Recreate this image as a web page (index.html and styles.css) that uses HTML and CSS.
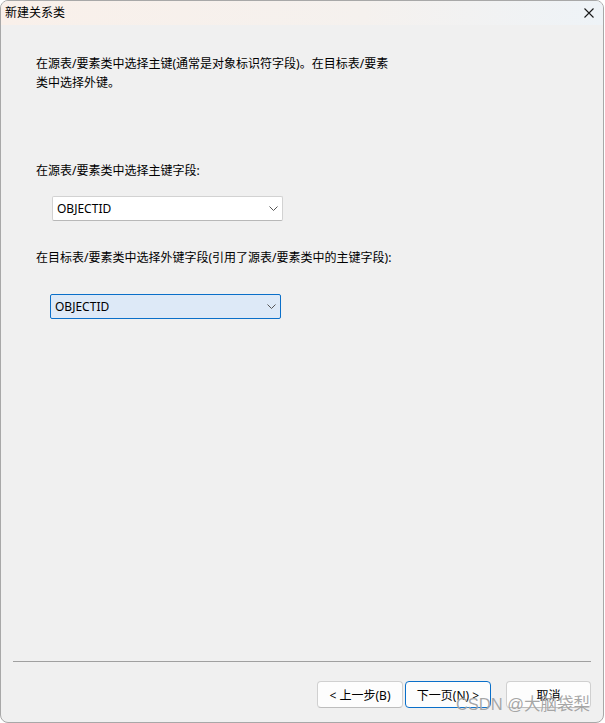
FILE: index.html
```html
<!DOCTYPE html>
<html lang="zh-CN">
    <head>
        <meta charset="UTF-8" />
        <meta name="viewport" content="width=device-width, initial-scale=1.0" />
        <title>新建关系类</title>
        <link rel="stylesheet" href="styles.css">
    </head>
    <body>
        <div class="window">
            <div class="titlebar">
                <span class="title">新建关系类</span>
                <svg class="close" width="10" height="10" viewBox="0 0 10 10">
                    <path d="M0.5 0.5 L9.5 9.5 M9.5 0.5 L0.5 9.5" stroke="#1a1a1a" stroke-width="1.1" fill="none" />
                </svg>
            </div>

            <main class="content">
                <p class="intro">在源表/要素类中选择主键(通常是对象标识符字段)。在目标表/要素<br>类中选择外键。</p>

                <label class="field-label">在源表/要素类中选择主键字段:</label>
                <div class="combo combo-source">
                    <span>OBJECTID</span>
                    <svg class="chevron" width="9" height="5" viewBox="0 0 9 5">
                        <path d="M0.5 0.5 L4.5 4.5 L8.5 0.5" stroke="#555" stroke-width="1" fill="none" />
                    </svg>
                </div>

                <label class="field-label label-target">在目标表/要素类中选择外键字段(引用了源表/要素类中的主键字段):</label>
                <div class="combo combo-target">
                    <span>OBJECTID</span>
                    <svg class="chevron" width="9" height="5" viewBox="0 0 9 5">
                        <path d="M0.5 0.5 L4.5 4.5 L8.5 0.5" stroke="#555" stroke-width="1" fill="none" />
                    </svg>
                </div>
            </main>

            <footer class="footer">
                <hr class="separator" />
                <div class="buttons">
                    <button class="btn">&lt; 上一步(B)</button>
                    <button class="btn btn-default">下一页(N) &gt;</button>
                    <button class="btn btn-cancel">取消</button>
                </div>
            </footer>

            <div class="watermark">CSDN @大脑袋梨</div>
        </div>
    </body>
</html>
```

FILE: styles.css
```css
* {
    padding: 0;
    margin: 0;
    box-sizing: border-box;
}
body {
    background: #ffffff;
    font-family: "Noto Sans", "Noto Sans CJK SC", sans-serif;
    font-size: 12px;
    color: #000;
}

.window {
    width: 604px;
    height: 723px;
    border: 1px solid #a8a8a8;
    border-radius: 8px;
    background: #f0f0f0;
    display: flex;
    flex-direction: column;
    overflow: hidden;
    position: relative;
}

.titlebar {
    height: 24px;
    background: linear-gradient(to right, #f9f0ea, #f5f1ee 60%, #eef3f7);
    display: flex;
    align-items: center;
    justify-content: space-between;
    padding: 0 9px 0 4px;
}
.title {
    line-height: 24px;
}

.content {
    flex: 1;
    padding: 29px 0 0 35px;
}
.intro {
    line-height: 19px;
}
.field-label {
    display: block;
    line-height: 19px;
    margin-top: 69px;
}
.label-target {
    margin-top: 27px;
}

.combo {
    width: 231px;
    height: 25px;
    margin-top: 16px;
    display: flex;
    align-items: center;
    justify-content: space-between;
    padding: 0 4px 0 4px;
    border-radius: 2px;
}
.combo-source {
    margin-left: 16px;
    background: #ffffff;
    border: 1px solid #d2d2d2;
    border-bottom-color: #b8b8b8;
}
.combo-target {
    margin-left: 14px;
    margin-top: 27px;
    background: #dde9f7;
    border: 1px solid #0a6fc9;
}

.footer {
    padding: 0 12px 14px 12px;
}
.separator {
    border: none;
    border-top: 1px solid #a0a0a0;
}
.buttons {
    display: flex;
    justify-content: flex-end;
    margin-top: 19px;
}
.btn {
    width: 86px;
    height: 27px;
    font-family: "Noto Sans", "Noto Sans CJK SC", sans-serif;
    font-size: 12px;
    background: #fdfdfd;
    border: 1px solid #d0d0d0;
    border-bottom-color: #bdbdbd;
    border-radius: 4px;
    color: #000;
}
.btn-default {
    margin-left: 2px;
    border: 1px solid #0a6fc9;
}
.btn-cancel {
    width: 85px;
    margin-left: 15px;
}

.watermark {
    position: absolute;
    right: 13px;
    bottom: 7px;
    font-family: "Liberation Sans", "Noto Sans CJK SC", sans-serif;
    font-size: 16.5px;
    color: rgba(150, 150, 150, 0.85);
    text-shadow: 0 0 1px rgba(255, 255, 255, 0.6);
    pointer-events: none;
}
```
